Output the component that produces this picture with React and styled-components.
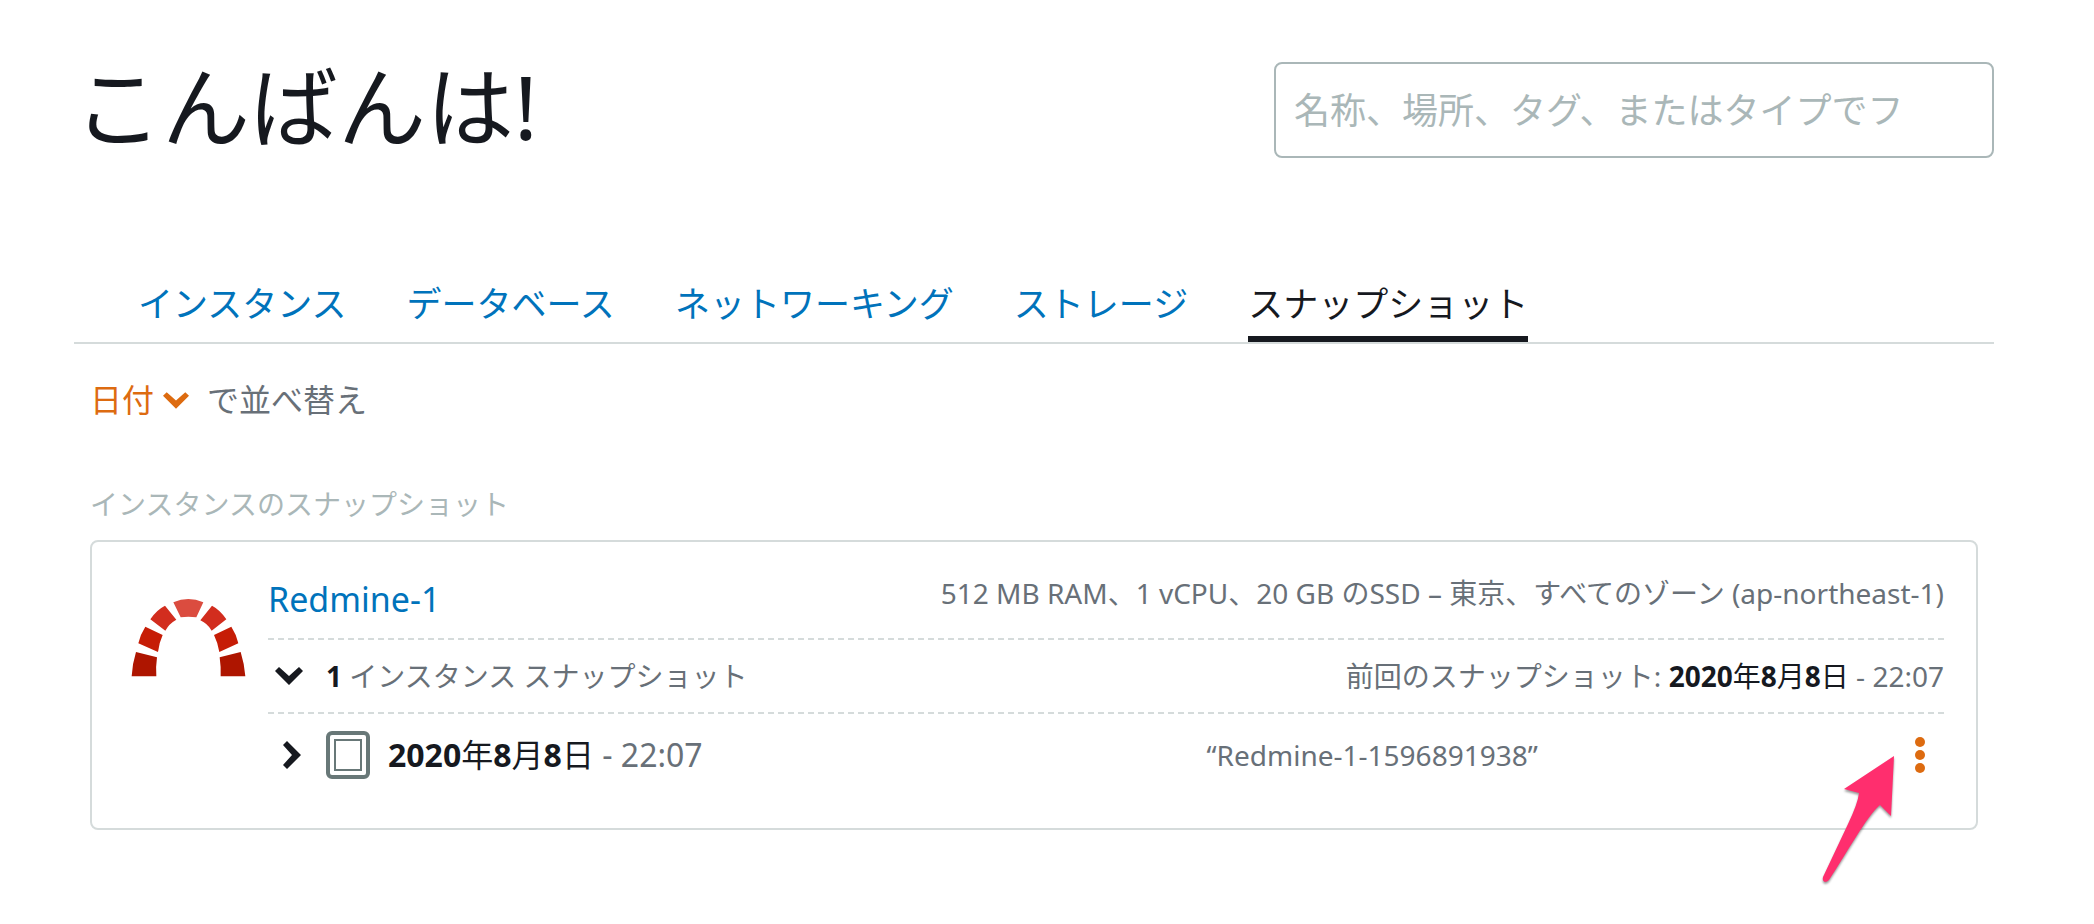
import { useState } from 'react';
import styled, { createGlobalStyle } from 'styled-components';

const tabs = [
  { id: 'instances', label: 'インスタンス' },
  { id: 'databases', label: 'データベース' },
  { id: 'networking', label: 'ネットワーキング' },
  { id: 'storage', label: 'ストレージ' },
  { id: 'snapshots', label: 'スナップショット' },
];

const RedmineLogo = () => (
  <svg width="115" height="79" viewBox="62 55 345 237" aria-hidden="true">
    <path d="M189 68Q234 48 279 68L258 113Q234 110 211 113Z" fill="#db4c3f" />
    <path
      d="M164 78L198 120Q176 132 165 153L120 119Q138 91 164 78ZM305 78Q330 91 348 119L304 153Q292 132 270 122Z"
      fill="#d22d1e"
    />
    <path
      d="M105 141L157 166Q146 190 143 217L84 191Q90 164 105 141ZM363 141Q378 164 384 191L327 217Q322 188 311 166Z"
      fill="#c61d06"
    />
    <path
      d="M77 217L140 233Q136 260 138 290H64Q66 252 77 217ZM391 217Q402 252 405 290H331Q332 260 328 233Z"
      fill="#ae1500"
    />
  </svg>
);

const Chevron = ({ width, height, points, viewBox }) => (
  <svg width={width} height={height} viewBox={viewBox} aria-hidden="true">
    <polygon points={points} fill="currentColor" />
  </svg>
);

const ChevronDown = ({ width, height }) => (
  <Chevron
    width={width}
    height={height}
    viewBox="0 0 28 18"
    points="4,0 14,9 24,0 28,4 14,18 0,4"
  />
);

const ChevronRight = () => (
  <Chevron
    width={18}
    height={28}
    viewBox="0 0 18 28"
    points="4,0 18,14 4,28 0,24 9,14 0,4"
  />
);

const Dots = () => (
  <svg width="10" height="36" viewBox="0 0 10 36" aria-hidden="true">
    <circle cx="5" cy="5" r="5" fill="currentColor" />
    <circle cx="5" cy="18" r="5" fill="currentColor" />
    <circle cx="5" cy="31" r="5" fill="currentColor" />
  </svg>
);

const App = () => {
  const [activeTab, setActiveTab] = useState('snapshots');
  const [checked, setChecked] = useState(false);

  return (
    <>
      <GlobalStyle />
      <Page>
        <Header>
          <Title>こんばんは!</Title>
          <Search
            type="text"
            aria-label="フィルター"
            placeholder="名称、場所、タグ、またはタイプでフ"
          />
        </Header>

        <Tabs role="tablist">
          {tabs.map((tab) => (
            <Tab
              key={tab.id}
              type="button"
              role="tab"
              aria-selected={tab.id === activeTab}
              $active={tab.id === activeTab}
              onClick={() => setActiveTab(tab.id)}
            >
              {tab.label}
            </Tab>
          ))}
        </Tabs>

        <Content>
          <SortBar>
            <SortPicker>
              <SortSelect id="sort" defaultValue="date">
                <option value="date">日付</option>
              </SortSelect>
              <ChevronDown width={26} height={17} />
            </SortPicker>
            <label htmlFor="sort">で並べ替え</label>
          </SortBar>

          <SectionTitle>インスタンスのスナップショット</SectionTitle>

          <Card>
            <RedmineLogo />
            <Details>
              <InstanceRow>
                <InstanceLink href="#redmine-1">Redmine-1</InstanceLink>
                <span>
                  512 MB RAM、1 vCPU、20 GB のSSD – 東京、すべてのゾーン
                  (ap-northeast-1)
                </span>
              </InstanceRow>

              <SummaryRow>
                <Toggle
                  type="button"
                  aria-label="閉じる"
                  aria-expanded="true"
                  $inset="0"
                >
                  <ChevronDown width={28} height={18} />
                </Toggle>
                <Count>
                  <Strong>1</Strong> インスタンス スナップショット
                </Count>
                <span>
                  前回のスナップショット: <SnapshotDate /> - 22:07
                </span>
              </SummaryRow>

              <SnapshotRow>
                <SnapshotInfo>
                  <Toggle
                    type="button"
                    aria-label="開く"
                    aria-expanded="false"
                    $inset="6px"
                  >
                    <ChevronRight />
                  </Toggle>
                  <Checkbox
                    type="checkbox"
                    id="snapshot"
                    checked={checked}
                    onChange={(e) => setChecked(e.target.checked)}
                  />
                  <SnapshotLabel htmlFor="snapshot">
                    <SnapshotDate /> - 22:07
                  </SnapshotLabel>
                </SnapshotInfo>
                <SnapshotName>“Redmine-1-1596891938”</SnapshotName>
                <MenuWrap>
                  <MenuButton type="button" aria-label="メニュー">
                    <Dots />
                  </MenuButton>
                  {/* pointer to the snapshot menu */}
                  <Pointer viewBox="0 0 80 136" aria-hidden="true">
                    <path
                      d="M74 5L24 38L39 42Q38 52 28 73L3 126Q2 130 5 131Q7 131 9 129C27 102 46 66 60 54L71 65Z"
                      fill="#ff2e6e"
                    />
                  </Pointer>
                </MenuWrap>
              </SnapshotRow>
            </Details>
          </Card>
        </Content>
      </Page>
    </>
  );
};

const SnapshotDate = () => (
  <DateText>
    <Strong>2020</Strong>年<Strong>8</Strong>月<Strong>8</Strong>日
  </DateText>
);

const GlobalStyle = createGlobalStyle`
  * {
    box-sizing: border-box;
  }

  body {
    margin: 0;
    background: #fff;
    color: #687078;
    font-family: 'Noto Sans', 'Noto Sans CJK JP', sans-serif;
    font-size: 28px;
    line-height: 40px;
  }

  button, input, select {
    font: inherit;
    color: inherit;
  }

  button {
    padding: 0;
    border: 0;
    background: none;
    cursor: pointer;
  }

  svg {
    display: block;
    flex: none;
  }
`;

const Page = styled.main`
  padding: 62px 100px 62px 74px;
`;

const Header = styled.header`
  display: flex;
  justify-content: space-between;
  align-items: flex-start;
`;

const Title = styled.h1`
  margin: 0;
  color: #16191f;
  font-size: 88px;
  font-weight: 400;
  line-height: 88px;
`;

const Search = styled.input`
  width: 37.5%;
  height: 96px;
  padding: 0 18px;
  border: 2px solid #aab7b8;
  border-radius: 8px;
  background: #fff;
  color: #16191f;
  font-size: 36px;

  &::placeholder {
    color: #aab7b8;
    opacity: 1;
  }
`;

const Tabs = styled.div`
  display: flex;
  gap: 60px;
  margin-top: 112px;
  padding-left: 64px;
  border-bottom: 2px solid #d5dbdb;
`;

const Tab = styled.button`
  height: 72px;
  padding-top: 2px;
  border-bottom: 6px solid ${({ $active }) => ($active ? '#16191f' : 'transparent')};
  color: ${({ $active }) => ($active ? '#16191f' : '#0073bb')};
  font-size: 35px;
  white-space: nowrap;
`;

const Content = styled.div`
  padding: 0 16px;
`;

const SortBar = styled.div`
  display: flex;
  align-items: center;
  gap: 18px;
  margin-top: 36px;
  font-size: 32px;
`;

const SortPicker = styled.span`
  display: flex;
  align-items: center;
  gap: 8px;
  color: #dd6b10;
`;

const SortSelect = styled.select`
  padding: 0;
  border: 0;
  background: none;
  appearance: none;
`;

const SectionTitle = styled.h2`
  margin: 64px 0 16px;
  color: #aab7b8;
  font-size: 28px;
  font-weight: 400;
`;

const Card = styled.article`
  display: flex;
  gap: 22px;
  padding: 24px 32px 32px 39px;
  border: 2px solid #d5dbdb;
  border-radius: 8px;

  > svg {
    margin-top: 32px;
  }
`;

const Details = styled.div`
  flex: 1;
  min-width: 0;
`;

const InstanceRow = styled.div`
  display: flex;
  justify-content: space-between;
  height: 72px;
  padding-top: 7px;
`;

const InstanceLink = styled.a`
  padding-top: 6px;
  color: #0073bb;
  font-size: 34px;
  text-decoration: none;
`;

const SummaryRow = styled.div`
  display: flex;
  align-items: center;
  height: 76px;
  border-top: 2px dashed #d5dbdb;
  border-bottom: 2px dashed #d5dbdb;
`;

const Toggle = styled.button`
  display: flex;
  justify-content: center;
  width: 42px;
  margin-right: 16px;
  padding-left: ${({ $inset }) => $inset};
  color: #16191f;
`;

const Count = styled.span`
  flex: 1;
`;

const Strong = styled.strong`
  color: #16191f;
  font-weight: 700;
`;

const DateText = styled.span`
  color: #16191f;
`;

const SnapshotRow = styled.div`
  display: flex;
  align-items: center;
  height: 82px;
`;

const SnapshotInfo = styled.div`
  display: flex;
  align-items: center;
  flex: 0 0 56%;
`;

const Checkbox = styled.input`
  display: grid;
  width: 44px;
  height: 48px;
  margin: 0;
  padding: 4px;
  border: 4px solid #687878;
  border-radius: 6px;
  appearance: none;

  &::before {
    content: '';
    border: 2px solid #687878;
    background: ${({ checked }) => (checked ? '#687878' : 'transparent')};
  }
`;

const SnapshotLabel = styled.label`
  margin-left: 18px;
  font-size: 32px;
`;

const SnapshotName = styled.span`
  flex: 1;
`;

const MenuWrap = styled.div`
  position: relative;
  padding-right: 19px;
`;

const MenuButton = styled.button`
  display: block;
  color: #dd6b10;
`;

const Pointer = styled.svg`
  position: absolute;
  top: 14px;
  right: 44px;
  width: 80px;
  height: 136px;
  filter: drop-shadow(0 2px 1px rgba(0, 0, 0, 0.4));
  pointer-events: none;
`;

export default App;
